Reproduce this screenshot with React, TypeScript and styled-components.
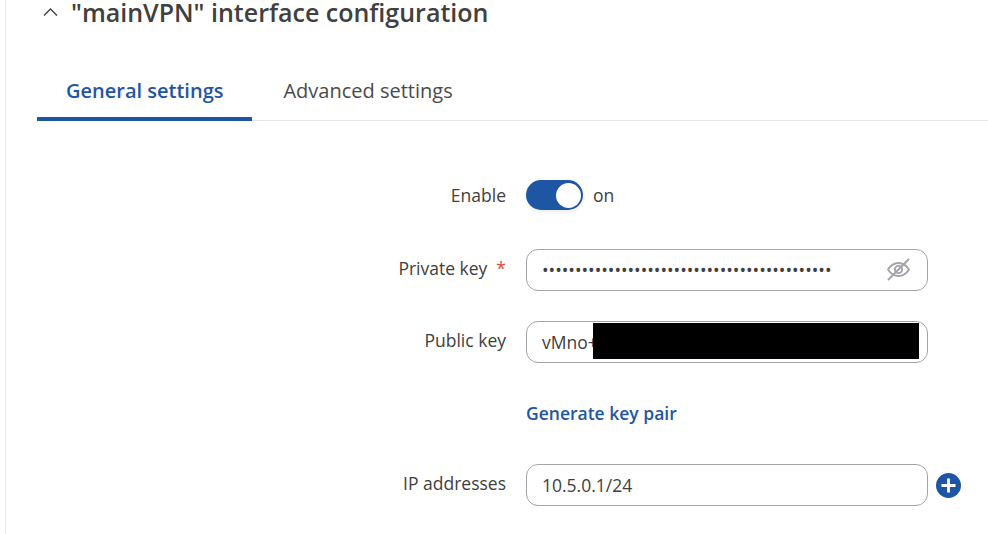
import { useState } from "react";
import styled, { createGlobalStyle } from "styled-components";

const GlobalStyle = createGlobalStyle`
  html, body { margin: 0; padding: 0; background: #fff; overflow: hidden; }
  body { font-family: "Open Sans", "Noto Sans", sans-serif; color: #404040; }
`;

const Page = styled.div`
  width: 983px;
  height: 534px;
  box-sizing: border-box;
  margin-left: 5px;
  border-left: 1px solid #e6e6e8;
  overflow: hidden;
`;

const Header = styled.div`
  display: flex;
  align-items: center;
  height: 24px;
  padding-left: 37px;
  gap: 13px;
`;

const Title = styled.h2`
  margin: 0;
  font-size: 25px;
  line-height: 26px;
  font-weight: 600;
  color: #404040;
  white-space: nowrap;
`;

const Tabs = styled.div`
  display: flex;
  height: 54px;
  margin: 43px 0 0 31px;
  border-bottom: 1px solid #e6e6e8;
  box-sizing: border-box;
`;

const Tab = styled.div<{ $active?: boolean }>`
  display: flex;
  align-items: center;
  height: 54px;
  box-sizing: border-box;
  font-size: 20px;
  font-weight: ${({ $active }) => ($active ? 600 : 400)};
  color: ${({ $active }) => ($active ? "#1f56a3" : "#4a4a4a")};
  border-bottom: ${({ $active }) => ($active ? "4px solid #1f56a3" : "none")};
  padding: ${({ $active }) => ($active ? "0 29px 4px" : "0 29px 8px 31px")};
`;

const Form = styled.div`
  display: flex;
  flex-direction: column;
  margin-top: 53px;
`;

const Row = styled.div<{ $gapBelow: number }>`
  display: grid;
  grid-template-columns: 520px 402px auto;
  align-items: center;
  height: 42px;
  margin-bottom: ${({ $gapBelow }) => $gapBelow}px;
`;

const Label = styled.label<{ $lift?: number }>`
  justify-self: end;
  padding: 0 20px ${({ $lift = 4 }) => $lift}px 0;
  font-size: 17.5px;
  color: #404040;
  white-space: nowrap;
`;

const Required = styled.span`
  color: #e0453a;
  margin-left: 9px;
`;

const ToggleWrap = styled.div`
  display: flex;
  align-items: center;
  gap: 10px;
`;

const Track = styled.button<{ $on: boolean }>`
  position: relative;
  width: 57px;
  height: 30px;
  padding: 0;
  border: none;
  border-radius: 15px;
  background: ${({ $on }) => ($on ? "#1f56a3" : "#b8b8bd")};
  box-shadow: 0 2px 4px rgba(0, 0, 0, 0.08);
  cursor: pointer;
`;

const Knob = styled.span<{ $on: boolean }>`
  position: absolute;
  top: 2.5px;
  left: ${({ $on }) => ($on ? "29.5px" : "2.5px")};
  width: 25px;
  height: 25px;
  border-radius: 50%;
  background: #fff;
`;

const ToggleText = styled.span`
  font-size: 17.5px;
  color: #404040;
`;

const Field = styled.div`
  position: relative;
  display: flex;
  align-items: center;
  height: 42px;
  box-sizing: border-box;
  padding: 0 15px;
  border: 1px solid #a3a3ab;
  border-radius: 12px;
  background: #fff;
  font-size: 17.5px;
  color: #404040;
`;

const Dots = styled.span`
  flex: 1;
  white-space: nowrap;
  overflow: hidden;
`;

const EyeButton = styled.span`
  display: flex;
  margin-right: 1px;
`;

const Redaction = styled.div`
  position: absolute;
  left: 66px;
  top: 1px;
  width: 326px;
  height: 36px;
  background: #000;
`;

const LinkText = styled.a`
  font-size: 17.5px;
  font-weight: 600;
  color: #1f56a3;
  cursor: pointer;
  white-space: nowrap;
`;

const AddButton = styled.span`
  display: flex;
  margin-left: 8px;
`;

function EyeOffIcon() {
  return (
    <svg width="24" height="24" viewBox="0 0 24 24" fill="none" stroke="#a3a3ab" strokeWidth="1.9">
      <path d="M1 11.5C3.5 7.6 7 5 11.5 5S19.5 7.6 22 11.5C19.5 15.4 16 18 11.5 18S3.5 15.4 1 11.5Z" />
      <circle cx="11.5" cy="11.5" r="3.6" />
      <path d="M22 1 1 22" strokeWidth="2" />
    </svg>
  );
}

function ChevronUp() {
  return (
    <svg width="15" height="10" viewBox="0 0 15 10" fill="none" stroke="#404040" strokeWidth="1.4">
      <path d="M1 8.5 7.5 2 14 8.5" />
    </svg>
  );
}

function PlusCircle() {
  return (
    <svg width="25" height="25" viewBox="0 0 25 25">
      <circle cx="12.5" cy="12.5" r="12.5" fill="#1f56a3" />
      <path d="M12.5 5.5v14M5.5 12.5h14" stroke="#fff" strokeWidth="2.8" />
    </svg>
  );
}

export default function App() {
  const [enabled, setEnabled] = useState(true);

  return (
    <Page>
      <GlobalStyle />
      <Header>
        <ChevronUp />
        <Title>"mainVPN" interface configuration</Title>
      </Header>
      <Tabs>
        <Tab $active>General settings</Tab>
        <Tab>Advanced settings</Tab>
      </Tabs>
      <Form>
        <Row $gapBelow={33}>
          <Label $lift={0}>Enable</Label>
          <ToggleWrap>
            <Track $on={enabled} onClick={() => setEnabled(!enabled)}>
              <Knob $on={enabled} />
            </Track>
            <ToggleText>{enabled ? "on" : "off"}</ToggleText>
          </ToggleWrap>
        </Row>
        <Row $gapBelow={30}>
          <Label>
            Private key<Required>*</Required>
          </Label>
          <Field>
            <Dots>{"•".repeat(44)}</Dots>
            <EyeButton>
              <EyeOffIcon />
            </EyeButton>
          </Field>
        </Row>
        <Row $gapBelow={29}>
          <Label>Public key</Label>
          <Field>
            vMno+
            <Redaction />
          </Field>
        </Row>
        <Row $gapBelow={30}>
          <span />
          <LinkText>Generate key pair</LinkText>
        </Row>
        <Row $gapBelow={0}>
          <Label>IP addresses</Label>
          <Field>10.5.0.1/24</Field>
          <AddButton>
            <PlusCircle />
          </AddButton>
        </Row>
      </Form>
    </Page>
  );
}
